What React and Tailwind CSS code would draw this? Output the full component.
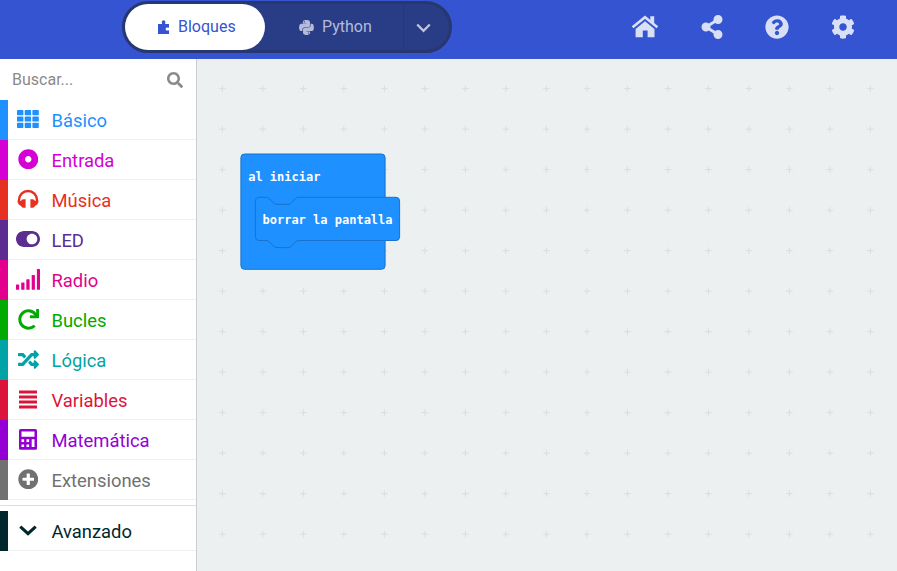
import React from 'react';
import { FaPython, FaShareAlt, FaQuestionCircle, FaCog, FaSearch, FaDotCircle, FaToggleOn, FaRandom, FaPlusCircle, FaRedo } from 'react-icons/fa';

const HomeIcon = () => (
  <svg width="28" height="24" viewBox="0 0 28 24" fill="none">
    <path d="M1.600 12.300 14 2.200l12.400 10.100" stroke="currentColor" strokeWidth="2.600" />
    <path d="M19.300 1.300h3.900v8.200l-3.900-3.200z" fill="currentColor" />
    <path d="M14 6.200 23.500 14v8.200h-6.900v-6.600h-4.800v6.600H4.600V14z" fill="currentColor" />
  </svg>
);
const PuzzleIcon = () => (
  <svg width="14" height="15" viewBox="0 0 14 15" fill="currentColor">
    <path d="M1 4h4c.3-.6-.2-1-.2-1.800C4.800 1 5.600.2 6.600.2s1.800.8 1.800 2c0 .8-.5 1.200-.2 1.800H12v3.600c-.6.3-1-.2-1.700-.2-1 0-1.700.7-1.700 1.600s.7 1.600 1.700 1.600c.7 0 1.100-.5 1.700-.2V14H1z" />
  </svg>
);
const Grid = () => (
  <svg width="22" height="18" viewBox="0 0 22 18" fill="currentColor">
    {[0, 6.400, 12.800].map((y) => [0, 7.700, 15.400].map((x) => (
      <rect key={x + '-' + y} x={x} y={y} width="6.400" height="5.200" rx=".7" />
    )))}
  </svg>
);
const Headphones = () => (
  <svg width="22" height="20" viewBox="0 0 22 20" fill="none">
    <path d="M2 14V11a9 9 0 0 1 18 0v3" stroke="currentColor" strokeWidth="2.400" />
    <path d="M8.600 10.200v8.500H6.600C4.700 18.700 4.200 17.400 4.200 17 2.200 16.300.8 15 .8 13V11.500L4.200 12c0-1 .8-1.800 2.400-1.800zM13.400 10.200v8.500h2c1.900 0 2.400-1.300 2.400-1.700 2-.7 3.400-2 3.400-4V11.500l-3.400.5c0-1-.8-1.800-2.400-1.800z" fill="currentColor" />
  </svg>
);
const Signal = () => (
  <svg width="24" height="21" viewBox="0 0 24 21" fill="currentColor">
    <rect x="0" y="15.500" width="3.200" height="5.300" rx=".6" />
    <rect x="5.200" y="13.500" width="3.300" height="7.300" rx=".6" />
    <rect x="10.300" y="10.300" width="3.300" height="10.500" rx=".6" />
    <rect x="15.700" y="6" width="3.200" height="14.800" rx=".6" />
    <rect x="20.900" y="0" width="3.100" height="20.800" rx=".6" />
  </svg>
);
const Lines = () => (
  <svg width="18" height="19" viewBox="0 0 18 19" fill="currentColor">
    <path d="M0 .5h18v3H0zM0 5.500h18v3H0zM0 10.500h18v3H0zM0 15.500h18v3H0z" />
  </svg>
);
const Calculator = () => (
  <svg width="18" height="21" viewBox="0 0 18 21">
    <rect width="18" height="20.700" rx="1.500" fill="currentColor" />
    <path d="M2.500 2.500h13v5.300h-13zM2.500 10.300h2.600v2.600H2.500zM7.500 10.300h2.600v2.600H7.500zM2.500 15.400h2.600V18H2.500zM7.500 15.400h2.600V18H7.500zM12.700 10.300h2.800V18h-2.800z" fill="#fff" />
  </svg>
);
const Chevron = () => (
  <svg width="18" height="11" viewBox="0 0 18 11" fill="none">
    <path d="m1.300 1.600 7.700 7 7.700-7" stroke="currentColor" strokeWidth="3.100" />
  </svg>
);

const categories = [
  { name: 'Básico', bar: 'bg-[#1e90ff]', text: 'text-[#1e90ff]', icon: <Grid /> },
  { name: 'Entrada', bar: 'bg-[#d400d4]', text: 'text-[#d400d4]', icon: <FaDotCircle size={20.500} /> },
  { name: 'Música', bar: 'bg-[#e63022]', text: 'text-[#e63022]', icon: <Headphones /> },
  { name: 'LED', bar: 'bg-[#5c2d91]', text: 'text-[#5c2d91]', icon: <FaToggleOn size={24} /> },
  { name: 'Radio', bar: 'bg-[#e3008c]', text: 'text-[#e3008c]', icon: <Signal /> },
  { name: 'Bucles', bar: 'bg-[#00aa00]', text: 'text-[#00aa00]', icon: <FaRedo size={21} /> },
  { name: 'Lógica', bar: 'bg-[#00a4a6]', text: 'text-[#00a4a6]', icon: <FaRandom size={21} /> },
  { name: 'Variables', bar: 'bg-[#dc143c]', text: 'text-[#dc143c]', icon: <Lines /> },
  { name: 'Matemática', bar: 'bg-[#9400d3]', text: 'text-[#9400d3]', icon: <Calculator /> },
  { name: 'Extensiones', bar: 'bg-[#717171]', text: 'text-[#717171]', icon: <FaPlusCircle size={20.500} /> },
];

function Category({ item }) {
  return (
    <div className={'flex h-10 shrink-0 ' + item.text}>
      <div className={'w-2 ' + item.bar} />
      <div className="flex flex-1 border-b border-[#ecf0f1]">
        <div className="flex w-10 items-center justify-center pb-px">{item.icon}</div>
        <span className="pl-[3.500px] pt-px text-[18.400px] leading-10">{item.name}</span>
      </div>
    </div>
  );
}

export default function App() {
  return (
    <div className="flex h-[571px] w-[897px] flex-col overflow-hidden bg-white font-['Roboto',sans-serif]">
      <header className="flex h-[59px] shrink-0 justify-between bg-[#3454d1]">
        <div className="ml-[122px] mt-px flex h-[52px] w-[330px] rounded-full border-3 border-[#27376f] bg-[#293c86] text-base">
          <div className="flex w-[140px] items-center rounded-full bg-white pl-[32px] text-[#3454d1]">
            <PuzzleIcon />
            <span className="ml-[7px]">Bloques</span>
          </div>
          <div className="flex w-[139px] items-center border-r border-[#27387a] pl-[33px] text-[#b4bbda]">
            <FaPython size={17} />
            <span className="ml-[7px]">Python</span>
          </div>
          <div className="flex w-[39px] items-center justify-center pt-[2px] text-[#bec5e0]">
            <svg width="15" height="10" viewBox="0 0 15 10" fill="none" stroke="currentColor" strokeWidth="2.300"><path d="m1.200 1.500 6.300 6.300 6.300-6.300" /></svg>
          </div>
        </div>
        <div className="flex h-[54px] w-[266px] text-[#d9dff5]">
          <div className="flex w-[28px] items-center justify-center"><HomeIcon /></div>
          <div className="ml-[40.500px] flex w-[24px] items-center justify-center"><FaShareAlt size={24} /></div>
          <div className="ml-[41px] flex w-[24px] items-center justify-center"><FaQuestionCircle size={24} /></div>
          <div className="ml-[42.500px] flex w-[24px] items-center justify-center"><FaCog size={24} /></div>
        </div>
      </header>
      <main className="flex min-h-0 flex-1">
        <aside className="flex w-[197px] shrink-0 flex-col border-r border-[#c9cdce] bg-white">
          <div className="flex h-[41px] shrink-0 items-center justify-between pl-3 pr-[13px] text-[#8a8a8a]">
            <span className="text-base">Buscar...</span>
            <FaSearch size={16} />
          </div>
          {categories.map((c) => <Category key={c.name} item={c} />)}
          <div className="mb-[5px] mt-[5px] h-px shrink-0 bg-[#dcdfe0]" />
          <Category item={{ name: 'Avanzado', bar: 'bg-[#00272b]', text: 'text-[#00272b]', icon: <Chevron /> }} />
        </aside>
        <section className="flex-1 bg-[#ecf0f1]">
          <svg width="700" height="512" viewBox="197 59 700 512" fontFamily="'DejaVu Sans Mono', monospace" fontSize="12" fontWeight="700">
            <defs>
              <pattern id="grid" x="202.100" y="68.400" width="40.500" height="40.500" patternUnits="userSpaceOnUse">
                <path d="M17 20.250h6.500M20.250 17v6.500" stroke="#d9dddf" strokeWidth="1" />
              </pattern>
            </defs>
            <rect x="197" y="59" width="700" height="512" fill="url(#grid)" />
            <g fill="#1e90ff" stroke="#1873cc" strokeWidth="1">
              <path d="M244.500 154h137a3.600 3.600 0 0 1 3.600 3.600V197l-4 4v36l4 4v24.700a3.600 3.600 0 0 1-3.600 3.600h-137a3.600 3.600 0 0 1-3.600-3.600V157.600a3.600 3.600 0 0 1 3.600-3.600z" />
              <path d="M259 197.300h7.200c1.800 0 2.700.9 3.600 1.800l3.600 3.600c.9.900 1.800 1.700 3.600 1.700h10.800c1.800 0 2.700-.8 3.600-1.700l3.600-3.600c.9-.9 1.800-1.800 3.600-1.800H396a3.600 3.600 0 0 1 3.600 3.600v36a3.600 3.600 0 0 1-3.600 3.600h-97.400c-1.800 0-2.700.9-3.600 1.800l-3.600 3.600c-.9.900-1.800 1.700-3.600 1.700H277c-1.800 0-2.700-.8-3.600-1.700l-3.600-3.600c-.9-.9-1.800-1.800-3.600-1.800H259a3.600 3.600 0 0 1-3.600-3.600v-36a3.600 3.600 0 0 1 3.600-3.600z" />
            </g>
            <text x="248.200" y="181" fill="#fff">al iniciar</text>
            <text x="262.500" y="224" fill="#fff">borrar la pantalla</text>
          </svg>
        </section>
      </main>
    </div>
  );
}
